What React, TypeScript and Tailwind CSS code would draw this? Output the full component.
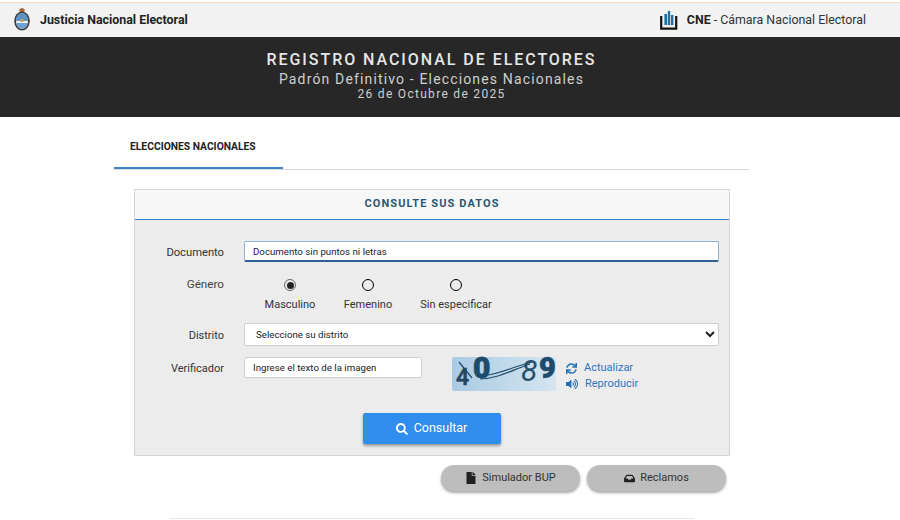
import {FaFile, FaInbox, FaSearch, FaSync, FaVolumeUp} from "react-icons/fa";

function Escudo() {
  return (
    <svg width="18" height="26" viewBox="0 0 18 26" className="mb-[3px]">
      <path d="M6 4 Q9 0 12 4 L11 6 H7 Z" fill="#a8683a" />
      <ellipse cx="9" cy="15" rx="7.8" ry="9.4" fill="#3d3d3d" />
      <ellipse cx="9" cy="15" rx="6" ry="7.8" fill="#f4f4f4" />
      <path d="M3 15 C3 9.5 6 7.2 9 7.2 C12 7.2 15 9.5 15 15 Z" fill="#5b93c9" />
      <path d="M3.2 17 H14.8 C14 20.5 11.5 22.8 9 22.8 C6.5 22.8 4 20.5 3.2 17 Z" fill="#6fa3d6" />
      <circle cx="9" cy="14.5" r="1.8" fill="#c9a14a" />
    </svg>
  );
}

function CneLogo() {
  return (
    <svg width="18" height="19" viewBox="0 0 18 19" className="mt-[1px]">
      <path d="M1.2 5 V17.6 H16.2 V5" fill="none" stroke="#111" strokeWidth="2.2" />
      <rect x="4.4" y="3" width="2.6" height="11" fill="#1d6fa5" />
      <rect x="7.8" y="0" width="2.4" height="14" fill="#1d6fa5" />
      <rect x="11" y="4" width="2.4" height="10" fill="#1d6fa5" />
    </svg>
  );
}

function Captcha() {
  return (
    <svg width="104" height="34" viewBox="0 0 104 34" className="overflow-visible rounded-[2px] bg-gradient-to-r from-[#a9cbe3] to-[#d5e5f0]">
      <text x="4" y="28" fontFamily="Roboto, sans-serif" fontSize="23" fontWeight="500" stroke="#24465f" strokeWidth="0.6" fill="#24465f">4</text>
      <text x="21" y="21" fontFamily="Roboto, sans-serif" fontSize="30" fontWeight="900" stroke="#1f4b6b" strokeWidth="0.8" fill="#1f4b6b">0</text>
      <text x="69" y="24" fontFamily="Roboto, sans-serif" fontSize="30" fontStyle="italic" fill="#27506e">8</text>
      <text x="87" y="21" fontFamily="Roboto, sans-serif" fontSize="29" fontWeight="900" stroke="#1f4b6b" strokeWidth="0.6" fill="#1f4b6b">9</text>
      <path d="M7 5 L20 21 M28 22 C44 22 58 14 78 7 M30 19 C46 18 60 10 80 5" fill="none" stroke="#1f4b6b" strokeWidth="1.2" />
    </svg>
  );
}

function Radio({label, checked, width}: {label: string; checked?: boolean; width: string}) {
  return (
    <div className={`flex flex-col items-center ${width}`}>
      <span className={`w-[12px] h-[12px] shrink-0 rounded-full border-[1.5px] flex items-center justify-center mt-[4px] ${checked ? "border-[#666]" : "border-black"}`}>
        {checked && <span className="w-[7px] h-[7px] rounded-full bg-[#222]" />}
      </span>
      <span className="text-[11px] text-[#333] mt-[6px] leading-[16px] whitespace-nowrap shrink-0">{label}</span>
    </div>
  );
}

function PillButton({icon, label}: {icon: React.ReactNode; label: string}) {
  return (
    <button className="w-[139px] h-[26px] rounded-[13px] bg-[#bdbdbd] shadow-[0_2px_3px_rgba(0,0,0,0.35)] flex items-center justify-center gap-[5px] text-[11px] text-[#333]">
      {icon}
      {label}
    </button>
  );
}

export default function App() {
  return (
    <div className="w-[900px] h-[520px] overflow-hidden bg-white font-['Roboto',sans-serif]">
      <div className="h-[3px] border-b border-[#f8dcc8]" />

      <div className="h-[34px] bg-[#f2f2f2] flex items-center justify-between pl-[13px] pr-[34px]">
        <div className="flex items-center gap-[9px]">
          <Escudo />
          <span className="text-[12.4px] font-bold text-[#222]">Justicia Nacional Electoral</span>
        </div>
        <div className="flex items-center gap-[9px]">
          <CneLogo />
          <span className="text-[12.4px] text-[#333]">
            <b className="text-[#222]">CNE</b> - Cámara Nacional Electoral
          </span>
        </div>
      </div>

      <div className="h-[80px] bg-[#272727] flex flex-col items-center pt-[13px] pr-[37px] text-white">
        <h1 className="text-[16px] leading-[20px] font-medium tracking-[1.95px] text-[#e6e6e6]">REGISTRO NACIONAL DE ELECTORES</h1>
        <p className="text-[14px] leading-[17px] tracking-[1.15px] text-[#cfcfcf] mt-[1px]">Padrón Definitivo - Elecciones Nacionales</p>
        <p className="text-[12px] leading-[13px] tracking-[1.3px] text-[#cfcfcf]">26 de Octubre de 2025</p>
      </div>

      <div className="ml-[114px] w-[635px] border-b border-[#d9d9d9] h-[53px]">
        <div className="w-[169px] h-[52px] border-b-[2px] border-[#3d85c6] flex items-center pl-[16px]">
          <span className="text-[10.3px] font-bold text-[#222] pt-[10px]">ELECCIONES NACIONALES</span>
        </div>
      </div>

      <div className="ml-[134px] w-[596px] mt-[19px] h-[267px] border border-[#d5d5d5] bg-[#ececec] flex flex-col">
        <div className="h-[30px] bg-[#f7f7f7] border-b border-[#3d85c6] flex items-center justify-center">
          <span className="text-[11px] font-bold tracking-[1.1px] text-[#2a5674]">CONSULTE SUS DATOS</span>
        </div>

        <div className="flex flex-col pt-[21px]">
          <div className="flex items-center h-[21px]">
            <label className="w-[89px] text-right text-[11.2px] text-[#333] pt-[4px]">Documento</label>
            <input
              readOnly
              value="Documento sin puntos ni letras"
              className="ml-[20px] w-[475px] h-[21px] bg-white rounded-[2px] border border-[#8fb3d3] border-b-[2px] border-b-[#2f5f93] px-[8px] text-[9.7px] text-[#222] outline-none"
            />
          </div>

          <div className="flex mt-[13px] h-[36px]">
            <label className="w-[89px] text-right text-[11.7px] text-[#444] pt-[1px] leading-[16px]">Género</label>
            <div className="flex ml-[20px]">
              <Radio label="Masculino" checked width="w-[92px]" />
              <Radio label="Femenino" width="w-[64px]" />
              <Radio label="Sin especificar" width="w-[112px]" />
            </div>
          </div>

          <div className="flex items-center h-[23px] mt-[12px]">
            <label className="w-[89px] text-right text-[11px] text-[#333] pt-[3px]">Distrito</label>
            <select className="ml-[20px] w-[475px] h-[23px] bg-white rounded-[2px] border border-[#cfcfcf] px-[7px] text-[9.7px] text-[#222] outline-none">
              <option>Seleccione su distrito</option>
            </select>
          </div>

          <div className="flex mt-[11px] h-[34px]">
            <label className="w-[89px] text-right text-[11px] text-[#333] leading-[21px] pt-[1px]">Verificador</label>
            <input
              readOnly
              value="Ingrese el texto de la imagen"
              className="ml-[20px] w-[178px] h-[21px] bg-white rounded-[2px] border border-[#cfcfcf] px-[8px] text-[9.7px] text-[#222] outline-none"
            />
            <div className="ml-[30px]">
              <Captcha />
            </div>
            <div className="ml-[10px] pt-[3px] flex flex-col text-[11px] text-[#2f74c0] leading-[16px]">
              <a className="flex items-center gap-[7px]">
                <FaSync className="text-[11px] text-[#1f6fb5]" /> Actualizar
              </a>
              <a className="flex items-center gap-[7px]">
                <FaVolumeUp className="text-[12px] text-[#1f6fb5]" /> Reproducir
              </a>
            </div>
          </div>

          <div className="flex justify-center mt-[22px]">
            <button className="w-[138px] h-[31px] ml-[-1px] bg-[#2f8ded] rounded-[2px] shadow-[0_2px_3px_rgba(0,0,0,0.35)] flex items-center justify-center gap-[6px] text-[12.5px] text-white">
              <FaSearch className="text-[12px]" /> Consultar
            </button>
          </div>
        </div>
      </div>

      <div className="ml-[441px] mt-[9px] flex gap-[7px]">
        <PillButton icon={<FaFile className="text-[12px] text-[#222]" />} label="Simulador BUP" />
        <PillButton icon={<FaInbox className="text-[11px] text-[#222]" />} label="Reclamos" />
      </div>

      <div className="ml-[170px] w-[524px] mt-[27px] border-t border-[#e5e5e5]" />
    </div>
  );
}
